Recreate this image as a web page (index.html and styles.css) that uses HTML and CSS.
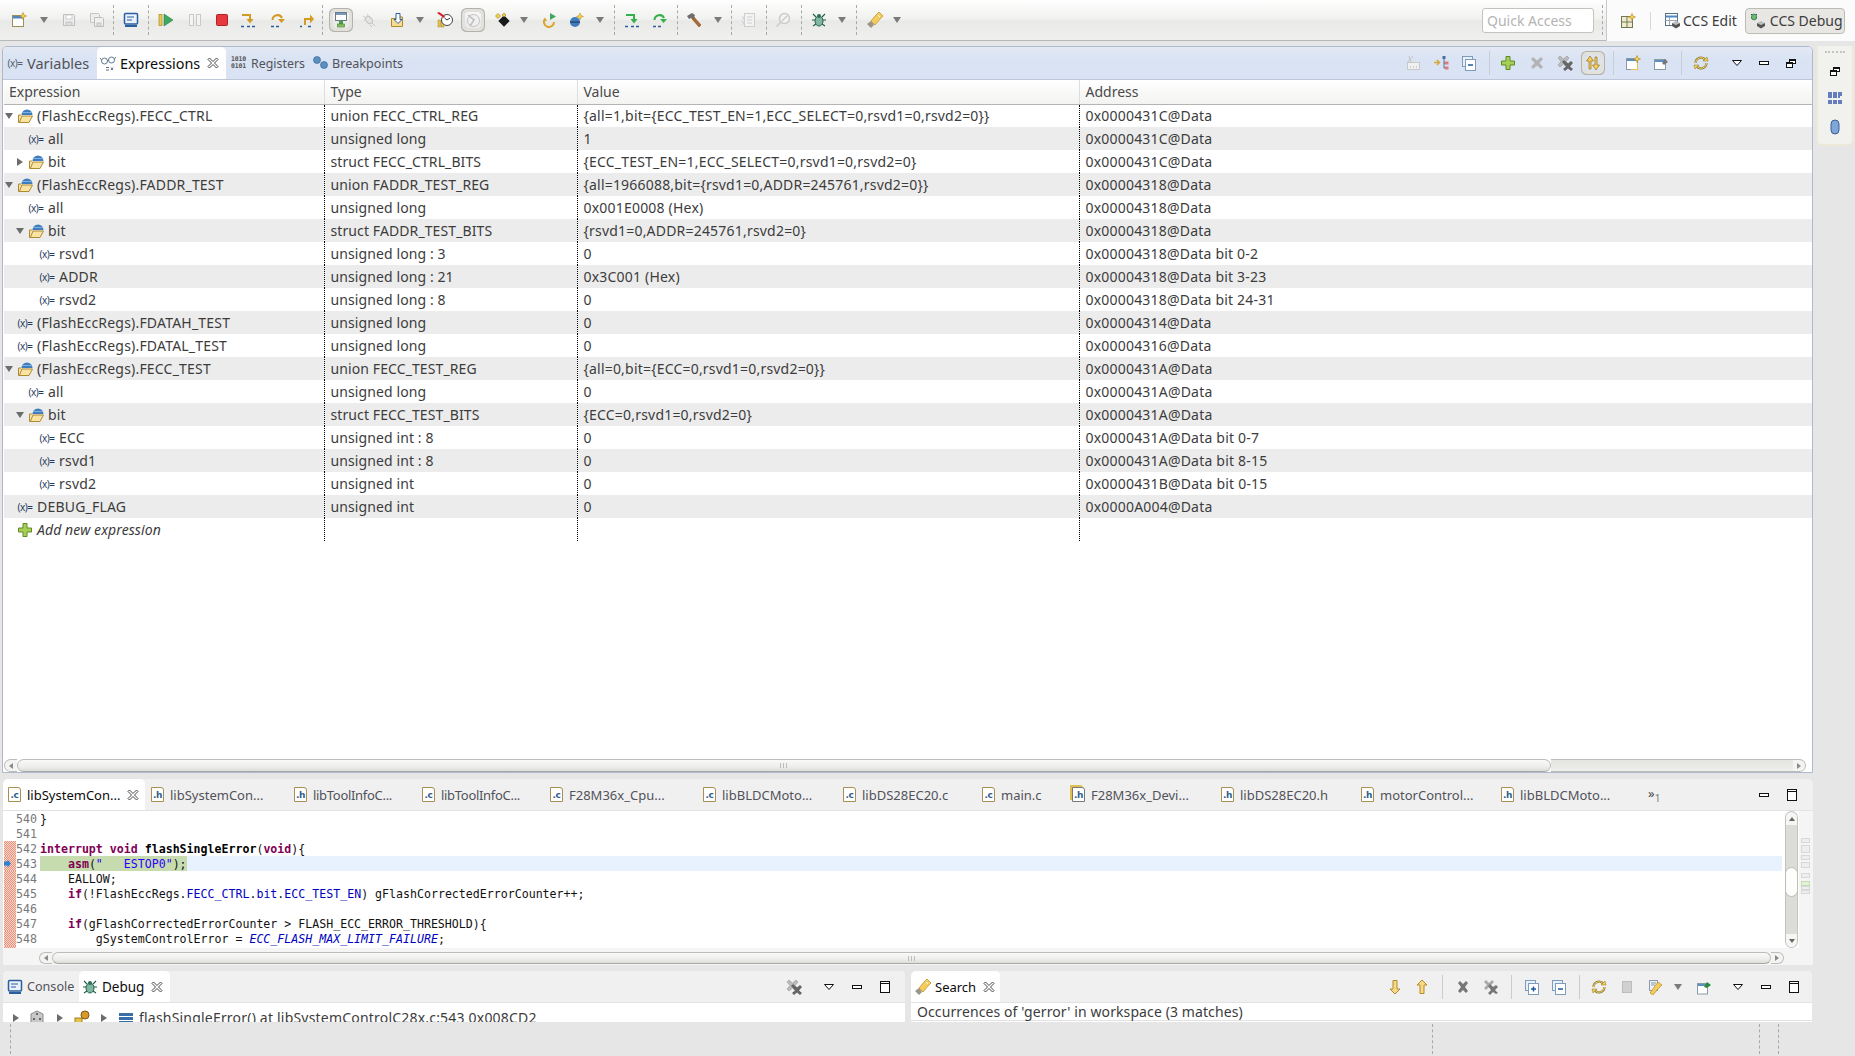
FILE: index.html
```html
<!DOCTYPE html>
<html lang="en">
<head>
<meta charset="utf-8">
<title>CCS Debug</title>
<link rel="stylesheet" href="styles.css">
</head>
<body>
<svg class="defs" width="0" height="0">
<symbol id="new" viewBox="0 0 16 16"><rect x="1.500" y="3.500" width="11" height="11" fill="#fff" stroke="#9a8f5a"/><rect x="2" y="4" width="10" height="2.500" fill="#4f86c4"/><path d="M12 .5l1 2.500 2.500 1-2.500 1-1 2.500-1-2.500-2.500-1 2.500-1z" fill="#f5d04a" stroke="#b08a20" stroke-width=".6"/></symbol>
<symbol id="save" viewBox="0 0 16 16"><path d="M2.500 2.500h10l1 1v10h-11z" fill="#f0f0f0" stroke="#bdbdbd"/><rect x="5" y="3" width="6" height="4" fill="#fff" stroke="#ccc"/><rect x="5" y="10" width="6" height="3.500" fill="#ddd" stroke="#c4c4c4"/></symbol>
<symbol id="saveall" viewBox="0 0 16 16"><path d="M1.500 1.500h8l1 1v8h-9z" fill="#eee" stroke="#c6c6c6"/><path d="M5.500 5.500h8l1 1v8h-9z" fill="#f0f0f0" stroke="#bdbdbd"/><rect x="8" y="11" width="4" height="3" fill="#ddd" stroke="#c4c4c4"/></symbol>
<symbol id="term" viewBox="0 0 16 16"><rect x="1.500" y="1.500" width="13" height="10.500" rx="1" fill="#eaf1fa" stroke="#2a5f9e" stroke-width="1.500"/><path d="M4 5h7M4 8h5" stroke="#2a5f9e" stroke-width="1.200"/><rect x="2" y="13" width="12" height="2" fill="#2a5f9e"/></symbol>
<symbol id="resume" viewBox="0 0 16 16"><rect x="1" y="2.500" width="3" height="11" fill="#e9c94f" stroke="#a98a1f" stroke-width=".7"/><path d="M6 2l9 6-9 6z" fill="#3fa75e" stroke="#2a7d44" stroke-width=".6"/></symbol>
<symbol id="suspend" viewBox="0 0 16 16"><rect x="2.500" y="2.500" width="4" height="11" fill="#f4f4f4" stroke="#c9c9c9"/><rect x="9.500" y="2.500" width="4" height="11" fill="#f4f4f4" stroke="#c9c9c9"/></symbol>
<symbol id="stop" viewBox="0 0 16 16"><rect x="2.500" y="2.500" width="11" height="11" rx="1" fill="#e5393c" stroke="#b02225"/></symbol>
<symbol id="into" viewBox="0 0 16 16"><path d="M2 3h8v5" fill="none" stroke="currentColor" stroke-width="2"/><path d="M6.500 7h7L10 11.500z" fill="currentColor"/><path d="M1 14.500h3M7 14.500h3M12 14.500h3" stroke="#2a5f9e" stroke-width="1.300"/></symbol>
<symbol id="over" viewBox="0 0 16 16"><path d="M2.500 8a5 5 0 0 1 9.500-2" fill="none" stroke="currentColor" stroke-width="2"/><path d="M8 7h7l-3.500 4z" fill="currentColor"/><path d="M1 14.500h3M6 14.500h3" stroke="#2a5f9e" stroke-width="1.300"/></symbol>
<symbol id="ret" viewBox="0 0 16 16"><path d="M5 13V7h6" fill="none" stroke="currentColor" stroke-width="2"/><path d="M10 2.500v9l4-4.500z" fill="currentColor"/><path d="M0 14.500h2M8 14.500h3" stroke="#2a5f9e" stroke-width="1.300"/></symbol>
<symbol id="connect" viewBox="0 0 16 16"><rect x="2.500" y=".5" width="11" height="8" fill="#fff" stroke="#6a7c8c"/><rect x="3" y="1" width="10" height="2" fill="#7a98b8"/><rect x="6" y="9" width="4" height="3" fill="#48a04c"/><rect x="4.500" y="12" width="7" height="3" fill="#8cbf5a" stroke="#3c7f3c" stroke-width=".6"/></symbol>
<symbol id="bugoff" viewBox="0 0 16 16"><ellipse cx="8" cy="8" rx="3" ry="4" transform="rotate(-40 8 8)" fill="#e4e4e4" stroke="#c4c4c4"/><path d="M2 4l3 2M6 2l2 3M11 11l3 3M9 13l2 2M3 8h2" stroke="#c8c8c8"/></symbol>
<symbol id="folderdn" viewBox="0 0 16 16"><path d="M1.500 14.500v-8h5l1-1.500h5v9.500z" fill="#f7dc92" stroke="#b08a30"/><path d="M6 1.500h4v6h2L8 11.500 4 7.500h2z" fill="#fff" stroke="#2a5f9e"/></symbol>
<symbol id="bpskip" viewBox="0 0 16 16"><rect x="1" y="8" width="2.500" height="7" fill="#e5c24a" stroke="#a98a1f" stroke-width=".5"/><rect x="4.500" y="8" width="2.500" height="7" fill="#e5c24a" stroke="#a98a1f" stroke-width=".5"/><circle cx="10" cy="8" r="5.500" fill="#fff" stroke="#444"/><path d="M10 8L7.500 6M10 8l3-2" stroke="#333"/><path d="M0 1l7 5 1-2-6-4z" fill="#d6202a"/></symbol>
<symbol id="clockoff" viewBox="0 0 16 16"><circle cx="8.500" cy="8.500" r="6" fill="#f0f0f0" stroke="#c2c2c2"/><path d="M3 3l6 5-4 6" fill="none" stroke="#bdbdbd" stroke-width="1.500"/></symbol>
<symbol id="chip" viewBox="0 0 16 16"><rect x="5" y="5" width="8" height="8" transform="rotate(45 9 9)" fill="#1a1a1a"/><path d="M3 1.500l2.500 2.500L3 6.500.5 4z" fill="#f5d04a" stroke="#9a7a15" stroke-width=".6"/><path d="M9 1l2 2-2 2-2-2z" fill="#f5d04a" stroke="#9a7a15" stroke-width=".6"/></symbol>
<symbol id="restart" viewBox="0 0 16 16"><path d="M8 1l6 3.500L8 8z" fill="#3fa75e"/><path d="M3 7a5 5 0 1 0 9 3" fill="none" stroke="#d9a62a" stroke-width="2"/><path d="M1 9h4L3 5.500z" fill="#d9a62a"/></symbol>
<symbol id="ball" viewBox="0 0 16 16"><circle cx="7" cy="10" r="5" fill="#3f7dbe"/><rect x="2" y="9.500" width="10" height="1.200" fill="#1d3f68"/><path d="M12 1l1 2.500 2.500 1-2.500 1-1 2.500-1-2.500-2.500-1 2.500-1z" fill="#f5d04a" stroke="#b08a20" stroke-width=".5"/></symbol>
<symbol id="hammer" viewBox="0 0 16 16"><path d="M1 4l5-3 3 2-1 3-2 1-1-1-2 1z" fill="#6e6e6e"/><path d="M6 7l2-2 7 8-2 2z" fill="#a86a32" stroke="#704418" stroke-width=".5"/></symbol>
<symbol id="listoff" viewBox="0 0 16 16"><rect x="4.500" y="1.500" width="10" height="13" fill="#f3f3f3" stroke="#cfcfcf"/><path d="M2 4l2 2-2 2M2 9l2 2-2 2M7 5h5M7 8h5M7 11h5" fill="none" stroke="#cfcfcf"/></symbol>
<symbol id="searchoff" viewBox="0 0 16 16"><circle cx="9.500" cy="6.500" r="5" fill="#f4f4f4" stroke="#cbcbcb" stroke-width="1.500"/><path d="M6 10l-4.500 4.500M7 9l5-5" stroke="#cbcbcb" stroke-width="1.500"/></symbol>
<symbol id="bug" viewBox="0 0 16 16"><path d="M2 2l3 3M14 2l-3 3M1 8h3M15 8h-3M2 14l3-2M14 14l-3-2" stroke="#1f5a4a" stroke-width="1.100"/><ellipse cx="8" cy="9" rx="4" ry="5" fill="#7fb7a0" stroke="#27604f"/><circle cx="8" cy="4" r="2" fill="#2f6f5a"/></symbol>
<symbol id="flash" viewBox="0 0 16 16"><path d="M9 3l3-3 4 4-3 3-5 6-4-4z" fill="#f3cc5c" stroke="#b58a22" stroke-width=".7"/><path d="M4 9l3 4-3 3-4-4z" fill="#9a948a"/><path d="M11 3l2 2" stroke="#fff"/></symbol>
<symbol id="persp" viewBox="0 0 16 16"><rect x="1.500" y="3.500" width="11" height="11" fill="#f2ead0" stroke="#6f7a55"/><path d="M1.500 9h11M7 3.500v11" stroke="#6f7a55"/><path d="M12 .5l1 2.500 2.500 1-2.500 1-1 2.500-1-2.500-2.500-1 2.500-1z" fill="#f5d04a" stroke="#b08a20" stroke-width=".6"/></symbol>
<symbol id="edit" viewBox="0 0 16 16"><rect x=".5" y=".5" width="12" height="12" fill="#fff" stroke="#5a6f80"/><path d="M.5 3.500h12" stroke="#4f86c4" stroke-width="2"/><path d="M4.500 4v8M.5 7.500h12" stroke="#9aa6b0"/><path d="M7 10l4-2 4 2-4 2z" fill="#bdbdbd"/><path d="M7 10v3l4 2.500V12zM15 10v3l-4 2.500V12z" fill="#555"/></symbol>
<symbol id="debugp" viewBox="0 0 16 16"><path d="M1 1l2 2M7 1L5 3M1 5h2M7 5H5" stroke="#1f5a4a"/><ellipse cx="4" cy="4" rx="2.500" ry="3" fill="#6fbf6a" stroke="#27604f" stroke-width=".7"/><path d="M7 10l4-2 4 2-4 2z" fill="#bdbdbd"/><path d="M7 10v3l4 2.500V12zM15 10v3l-4 2.500V12z" fill="#555"/></symbol>
<symbol id="glasses" viewBox="0 0 16 16"><circle cx="4.500" cy="6" r="3" fill="#fff" stroke="#5f7a8c"/><circle cx="11.500" cy="5" r="3" fill="#fff" stroke="#5f7a8c"/><path d="M7.500 5.500l1-.3M1.500 5L0 3M14.500 4L16 2" stroke="#5f7a8c"/><path d="M6 12.500h3M6 15h3M11 12.500l2 2.500M13 12.500L11 15" stroke="#5a6c7a"/></symbol>
<symbol id="bps" viewBox="0 0 16 16"><circle cx="5" cy="5" r="3.500" fill="#5b8fc0" stroke="#2f6090" stroke-width=".6"/><circle cx="12" cy="10" r="3.500" fill="#5b8fc0" stroke="#2f6090" stroke-width=".6"/></symbol>
<symbol id="fold" viewBox="0 0 16 16"><path d="M4.500 7a5.500 5.500 0 0 1 11 0z" fill="#3f7dbe"/><path d="M5 4.500h10" stroke="#7fb0e0"/><path d="M4.500 7H1.500v7.500h10.500L15.500 8H5L2.500 14" fill="#f8e3a3" stroke="#b08a30"/></symbol>
<symbol id="plus" viewBox="0 0 16 16"><path d="M6 1.500h4v4.500h4.500v4H10v4.500H6V10H1.500V6H6z" fill="#a7ce56" stroke="#5d8c24"/></symbol>
<symbol id="xdis" viewBox="0 0 16 16"><path d="M2 4l2-2 4 3.500L12 2l2 2-3.500 4 3.500 4-2 2-4-3.500L4 14l-2-2 3.500-4z" fill="#b4b4b4"/></symbol>
<symbol id="xx" viewBox="0 0 16 16"><path d="M1 3l2-2 3.500 3L10 1l2 2-3 3.500 3 3.500-2 2-3.500-3L3 12l-2-2 3-3.500z" fill="#bbb" stroke="#888" stroke-width=".5"/><path d="M5 7l2-2 4 3.500L14 6l2 2-3 3.500 3 2.500-2 2-3-2.500L8 16l-2-2 3-2.500z" fill="#666"/></symbol>
<symbol id="sync" viewBox="0 0 16 16"><path d="M4 14V6H1.500L5 1l3.500 5H6v8z" fill="#f3cc5c" stroke="#a87f1c" stroke-width=".8"/><path d="M12 2v8h2.500L11 15l-3.500-5H10V2z" fill="#f3cc5c" stroke="#a87f1c" stroke-width=".8"/></symbol>
<symbol id="cyc" viewBox="0 0 16 16"><path d="M2.500 8a5.500 5.500 0 0 1 10-3" fill="none" stroke="#8a7a3a" stroke-width="2.200"/><path d="M13.500 8a5.500 5.500 0 0 1-10 3" fill="none" stroke="#8a7a3a" stroke-width="2.200"/><path d="M2.500 8a5.500 5.500 0 0 1 10-3" fill="none" stroke="#f3d35c" stroke-width="1"/><path d="M13.500 8a5.500 5.500 0 0 1-10 3" fill="none" stroke="#f3d35c" stroke-width="1"/><path d="M10 6h5l-1-4zM6 10H1l1 4z" fill="#f3cc5c" stroke="#917015" stroke-width=".5"/></symbol>
<symbol id="pin" viewBox="0 0 16 16"><rect x="1.500" y="4.500" width="11" height="10" fill="#fff" stroke="#8a9aa8"/><rect x="2" y="5" width="10" height="2" fill="#5b8fc0"/><path d="M9 8l3-4 3 3-4 3z" fill="#777"/></symbol>
<symbol id="newv" viewBox="0 0 16 16"><rect x="1.500" y="3.500" width="11" height="11" fill="#fff" stroke="#8a9aa8"/><rect x="2" y="4" width="10" height="2" fill="#5b8fc0"/><path d="M12.500 8v6.500H6" fill="none" stroke="#e5c24a"/><path d="M12 .5l1 2.500 2.500 1-2.500 1-1 2.500-1-2.500-2.500-1 2.500-1z" fill="#f5d04a" stroke="#b08a20" stroke-width=".6"/></symbol>
<symbol id="tflat" viewBox="0 0 16 16"><path d="M1 7.500h5M4 5l2.500 2.500L4 10" fill="none" stroke="#d3a93a" stroke-width="1.500"/><path d="M11 3v10M11 8h2M11 13h2" fill="none" stroke="#4a6f9a"/><rect x="9.500" y="1" width="3" height="3" fill="#4a6f9a"/><rect x="12" y="6.500" width="3.500" height="3" fill="#e27a7a"/><rect x="12" y="11.500" width="3.500" height="3" fill="#e27a7a"/></symbol>
<symbol id="colla" viewBox="0 0 16 16"><rect x="1.500" y="1.500" width="10" height="10" fill="#e8f0fa" stroke="#7f9bbb"/><rect x="4.500" y="4.500" width="10" height="11" fill="#fff" stroke="#7f9bbb"/><path d="M7 10h5" stroke="#1c5a9c" stroke-width="1.500"/></symbol>
<symbol id="expa" viewBox="0 0 16 16"><rect x="1.500" y="1.500" width="10" height="10" fill="#e8f0fa" stroke="#7f9bbb"/><rect x="4.500" y="4.500" width="10" height="11" fill="#fff" stroke="#7f9bbb"/><path d="M7 10h5M9.500 7.500v5" stroke="#1c5a9c" stroke-width="1.500"/></symbol>
<symbol id="expoff" viewBox="0 0 16 16"><path d="M5 1l2 6-2 5M9 1L3 8" stroke="#c4c4c4" fill="none"/><rect x="3.500" y="7.500" width="12" height="7" fill="#f0f0f0" stroke="#c8c8c8"/><path d="M6 12h1M9 12h1M12 12h1" stroke="#aaa"/></symbol>
<symbol id="vmenu" viewBox="0 0 16 16"><path d="M3.500 5.500h9L8 10.500z" fill="#fff" stroke="#111"/></symbol>
<symbol id="min" viewBox="0 0 16 16"><rect x="3.500" y="6.500" width="9" height="3" fill="#fff" stroke="#111"/></symbol>
<symbol id="max" viewBox="0 0 16 16"><rect x="3.500" y="2.500" width="9" height="11" fill="#fff" stroke="#111"/><path d="M3.500 4.500h9" stroke="#111"/></symbol>
<symbol id="rest" viewBox="0 0 16 16"><rect x="6.500" y="4.500" width="6" height="4" fill="#fff" stroke="#111"/><rect x="3.500" y="7.500" width="6" height="5" fill="#fff" stroke="#111"/><path d="M3.500 8.500h6M6.500 5.500h6" stroke="#111"/></symbol>
<symbol id="close" viewBox="0 0 16 16"><path d="M3 4.500L4.500 3 8 6.500 11.500 3 13 4.500 9.500 8 13 11.500 11.500 13 8 9.500 4.500 13 3 11.500 6.500 8z" fill="#fff" stroke="#333" stroke-width=".9"/></symbol>
<symbol id="down" viewBox="0 0 16 16"><path d="M6 1.500h4V10h3l-5 5-5-5h3z" fill="#f7d98a" stroke="#b58a22"/></symbol>
<symbol id="up" viewBox="0 0 16 16"><path d="M6 14.500h4V6h3L8 1 3 6h3z" fill="#f7d98a" stroke="#b58a22"/></symbol>
<symbol id="greybox" viewBox="0 0 16 16"><rect x="3.500" y="2.500" width="9" height="11" fill="#d0d0d0" stroke="#bdbdbd"/></symbol>
<symbol id="srch" viewBox="0 0 16 16"><rect x="2.500" y="1.500" width="8" height="10" fill="#eef2f8" stroke="#8a9aa8"/><path d="M4 4h5M4 6h4" stroke="#8a9aa8"/><path d="M8 7l3-4 4 3-4 4-5 6-3-2z" fill="#f3cc5c" stroke="#a87f1c" stroke-width=".6"/></symbol>
<symbol id="pingr" viewBox="0 0 16 16"><rect x="1.500" y="4.500" width="10" height="10.500" fill="#fff" stroke="#8a9aa8"/><rect x="2" y="5" width="9" height="2" fill="#5b8fc0"/><path d="M8 8l3-5 4 3-4 3z" fill="#2c8a3c"/></symbol>
<symbol id="rm" viewBox="0 0 16 16"><path d="M3 4l2-2 3 3 3-3 2 2-3 4 3 4-2 2-3-3-3 3-2-2 3-4z" fill="#777"/></symbol>
<symbol id="rmall" viewBox="0 0 16 16"><path d="M1 3l2-2 3 3 3-3 2 2-3 3 3 3-2 2-3-3-3 3-2-2 3-3z" fill="#aaa"/><path d="M5 7l2-2 3 3 3-2 2 2-3 3 3 3-2 1-3-2-3 3-2-2 3-3z" fill="#777"/></symbol>
<symbol id="stack" viewBox="0 0 16 16"><path d="M1 3h14v3H1zM1 7h14v3H1zM1 11h14v3H1z" fill="#3a6ea5"/></symbol>
<symbol id="proc" viewBox="0 0 16 16"><path d="M8 1l6 3v8l-6 3-6-3V4z" fill="#c8c8c8" stroke="#8a8a8a"/><circle cx="8" cy="4" r="1" fill="#444"/><circle cx="5" cy="9" r="1" fill="#444"/><circle cx="11" cy="9" r="1" fill="#444"/></symbol>
<symbol id="thr" viewBox="0 0 16 16"><rect x="1" y="8" width="7" height="7" fill="#e5c24a" stroke="#a0801c"/><circle cx="11" cy="5" r="4" fill="#d99a2a" stroke="#80580f"/></symbol>
<symbol id="tdown" viewBox="0 0 16 16"><rect x="4" y="1" width="8" height="14" rx="4" fill="#7fa6d8" stroke="#3a5f95"/></symbol>
<symbol id="lines" viewBox="0 0 16 16"><path d="M1 2h14M1 4h14M1 6h12M1 10h14M1 12h14" stroke="#3a55b0" stroke-width="1.300" stroke-dasharray="4 1"/></symbol>
</svg>

<header class="topbar">
  <div class="tb-grid maintb">
    <svg class="ic"><use href="#new"/></svg><span class="dd"></span>
    <svg class="ic"><use href="#save"/></svg><svg class="ic"><use href="#saveall"/></svg><span class="sep"></span>
    <svg class="ic"><use href="#term"/></svg><span class="sep"></span>
    <svg class="ic"><use href="#resume"/></svg><svg class="ic"><use href="#suspend"/></svg><svg class="ic"><use href="#stop"/></svg>
    <svg class="ic or"><use href="#into"/></svg><svg class="ic or"><use href="#over"/></svg><svg class="ic or"><use href="#ret"/></svg><span class="sep"></span>
    <svg class="ic on"><use href="#connect"/></svg><svg class="ic"><use href="#bugoff"/></svg><svg class="ic"><use href="#folderdn"/></svg><span class="dd"></span>
    <svg class="ic"><use href="#bpskip"/></svg><svg class="ic on"><use href="#clockoff"/></svg><svg class="ic"><use href="#chip"/></svg><span class="dd"></span>
    <svg class="ic"><use href="#restart"/></svg><svg class="ic"><use href="#ball"/></svg><span class="dd"></span><span class="sep"></span>
    <svg class="ic gr"><use href="#into"/></svg><svg class="ic gr"><use href="#over"/></svg><span class="sep"></span>
    <svg class="ic"><use href="#hammer"/></svg><span class="dd"></span><span class="sep"></span>
    <svg class="ic"><use href="#listoff"/></svg><span class="sep"></span>
    <svg class="ic"><use href="#searchoff"/></svg><span class="sep"></span>
    <svg class="ic"><use href="#bug"/></svg><span class="dd"></span><span class="sep"></span>
    <svg class="ic"><use href="#flash"/></svg><span class="dd"></span>
  </div>
  <div class="perspectives">
    <div class="quick">Quick Access</div>
    <span class="sep tall"></span>
    <div class="perspbar">
      <svg class="ic"><use href="#persp"/></svg>
      <span class="vline"></span>
      <div class="persp"><svg class="ic"><use href="#edit"/></svg>CCS Edit</div>
      <div class="persp active"><svg class="ic"><use href="#debugp"/></svg>CCS Debug</div>
    </div>
  </div>
</header>

<div class="work">
  <main class="main">
    <section class="panel exprpanel">
      <div class="tabbar bluebar">
        <div class="tab t-var"><span class="vic big">(x)=</span>Variables</div>
        <div class="tab t-exp active"><svg class="ic"><use href="#glasses"/></svg>Expressions<svg class="ic closeic"><use href="#close"/></svg></div>
        <div class="tab t-reg small"><span class="bits">1010<br>0101</span>Registers</div>
        <div class="tab t-bp small"><svg class="ic"><use href="#bps"/></svg>Breakpoints</div>
        <div class="tb-grid exprtb">
          <svg class="ic"><use href="#expoff"/></svg><svg class="ic"><use href="#tflat"/></svg><svg class="ic"><use href="#colla"/></svg><span class="sep solid"></span>
          <svg class="ic"><use href="#plus"/></svg><svg class="ic"><use href="#xdis"/></svg><svg class="ic"><use href="#xx"/></svg><svg class="ic on"><use href="#sync"/></svg><span class="sep solid"></span>
          <svg class="ic"><use href="#newv"/></svg><svg class="ic"><use href="#pin"/></svg><span class="sep solid"></span>
          <svg class="ic"><use href="#cyc"/></svg><svg class="ic"><use href="#vmenu"/></svg><svg class="ic"><use href="#min"/></svg><svg class="ic"><use href="#rest"/></svg>
        </div>
      </div>
      <div class="exprbody">
        <table class="exprs">
          <colgroup><col class="c1"><col class="c2"><col class="c3"><col></colgroup>
          <thead><tr><th>Expression</th><th>Type</th><th>Value</th><th>Address</th></tr></thead>
          <tbody>
            <tr><td><div class="en l0"><span class="ar down"></span><svg class="ic"><use href="#fold"/></svg>(FlashEccRegs).FECC_CTRL</div></td><td>union FECC_CTRL_REG</td><td>{all=1,bit={ECC_TEST_EN=1,ECC_SELECT=0,rsvd1=0,rsvd2=0}}</td><td>0x0000431C@Data</td></tr>
            <tr><td><div class="en l1"><span class="ar"></span><span class="vic">(x)=</span>all</div></td><td>unsigned long</td><td>1</td><td>0x0000431C@Data</td></tr>
            <tr><td><div class="en l1"><span class="ar right"></span><svg class="ic"><use href="#fold"/></svg>bit</div></td><td>struct FECC_CTRL_BITS</td><td>{ECC_TEST_EN=1,ECC_SELECT=0,rsvd1=0,rsvd2=0}</td><td>0x0000431C@Data</td></tr>
            <tr><td><div class="en l0"><span class="ar down"></span><svg class="ic"><use href="#fold"/></svg>(FlashEccRegs).FADDR_TEST</div></td><td>union FADDR_TEST_REG</td><td>{all=1966088,bit={rsvd1=0,ADDR=245761,rsvd2=0}}</td><td>0x00004318@Data</td></tr>
            <tr><td><div class="en l1"><span class="ar"></span><span class="vic">(x)=</span>all</div></td><td>unsigned long</td><td>0x001E0008 (Hex)</td><td>0x00004318@Data</td></tr>
            <tr><td><div class="en l1"><span class="ar down"></span><svg class="ic"><use href="#fold"/></svg>bit</div></td><td>struct FADDR_TEST_BITS</td><td>{rsvd1=0,ADDR=245761,rsvd2=0}</td><td>0x00004318@Data</td></tr>
            <tr><td><div class="en l2"><span class="ar"></span><span class="vic">(x)=</span>rsvd1</div></td><td>unsigned long : 3</td><td>0</td><td>0x00004318@Data bit 0-2</td></tr>
            <tr><td><div class="en l2"><span class="ar"></span><span class="vic">(x)=</span>ADDR</div></td><td>unsigned long : 21</td><td>0x3C001 (Hex)</td><td>0x00004318@Data bit 3-23</td></tr>
            <tr><td><div class="en l2"><span class="ar"></span><span class="vic">(x)=</span>rsvd2</div></td><td>unsigned long : 8</td><td>0</td><td>0x00004318@Data bit 24-31</td></tr>
            <tr><td><div class="en l0"><span class="ar"></span><span class="vic">(x)=</span>(FlashEccRegs).FDATAH_TEST</div></td><td>unsigned long</td><td>0</td><td>0x00004314@Data</td></tr>
            <tr><td><div class="en l0"><span class="ar"></span><span class="vic">(x)=</span>(FlashEccRegs).FDATAL_TEST</div></td><td>unsigned long</td><td>0</td><td>0x00004316@Data</td></tr>
            <tr><td><div class="en l0"><span class="ar down"></span><svg class="ic"><use href="#fold"/></svg>(FlashEccRegs).FECC_TEST</div></td><td>union FECC_TEST_REG</td><td>{all=0,bit={ECC=0,rsvd1=0,rsvd2=0}}</td><td>0x0000431A@Data</td></tr>
            <tr><td><div class="en l1"><span class="ar"></span><span class="vic">(x)=</span>all</div></td><td>unsigned long</td><td>0</td><td>0x0000431A@Data</td></tr>
            <tr><td><div class="en l1"><span class="ar down"></span><svg class="ic"><use href="#fold"/></svg>bit</div></td><td>struct FECC_TEST_BITS</td><td>{ECC=0,rsvd1=0,rsvd2=0}</td><td>0x0000431A@Data</td></tr>
            <tr><td><div class="en l2"><span class="ar"></span><span class="vic">(x)=</span>ECC</div></td><td>unsigned int : 8</td><td>0</td><td>0x0000431A@Data bit 0-7</td></tr>
            <tr><td><div class="en l2"><span class="ar"></span><span class="vic">(x)=</span>rsvd1</div></td><td>unsigned int : 8</td><td>0</td><td>0x0000431A@Data bit 8-15</td></tr>
            <tr><td><div class="en l2"><span class="ar"></span><span class="vic">(x)=</span>rsvd2</div></td><td>unsigned int</td><td>0</td><td>0x0000431B@Data bit 0-15</td></tr>
            <tr><td><div class="en l0"><span class="ar"></span><span class="vic">(x)=</span>DEBUG_FLAG</div></td><td>unsigned int</td><td>0</td><td>0x0000A004@Data</td></tr>
            <tr><td><div class="en l0 addnew"><span class="ar"></span><svg class="ic"><use href="#plus"/></svg>Add new expression</div></td><td></td><td></td><td></td></tr>
          </tbody>
        </table>
      </div>
      <div class="hscroll top">
        <span class="sbtn left"></span><div class="thumb"><span class="grip"></span></div><span class="strack"></span><span class="sbtn right"></span>
      </div>
    </section>

    <section class="panel editor">
      <div class="tabbar greybar edtabs">
        <div class="tab etab active"><span class="fi">.c</span>libSystemCon...<svg class="ic closeic"><use href="#close"/></svg></div>
        <div class="tab etab"><span class="fi">.h</span>libSystemCon...</div>
        <div class="tab etab"><span class="fi">.h</span>libToolInfoC...</div>
        <div class="tab etab"><span class="fi">.c</span>libToolInfoC...</div>
        <div class="tab etab"><span class="fi">.c</span>F28M36x_Cpu...</div>
        <div class="tab etab"><span class="fi">.c</span>libBLDCMoto...</div>
        <div class="tab etab"><span class="fi">.c</span>libDS28EC20.c</div>
        <div class="tab etab"><span class="fi">.c</span>main.c</div>
        <div class="tab etab"><span class="fi shared">.h</span>F28M36x_Devi...</div>
        <div class="tab etab"><span class="fi">.h</span>libDS28EC20.h</div>
        <div class="tab etab"><span class="fi">.h</span>motorControl...</div>
        <div class="tab etab"><span class="fi">.h</span>libBLDCMoto...</div>
        <div class="chev">»<sub>1</sub></div>
        <div class="tb-grid edtb"><svg class="ic"><use href="#min"/></svg><svg class="ic"><use href="#max"/></svg></div>
      </div>
      <div class="edbody">
        <div class="edmain">
          <div class="edrow">
            <div class="code">
              <div class="ln"><span class="gut"></span><span class="num">540</span><span class="src">}</span></div>
              <div class="ln"><span class="gut"></span><span class="num">541</span><span class="src"></span></div>
              <div class="ln"><span class="gut hatch"></span><span class="num">542</span><span class="src"><b>interrupt</b> <b>void</b> <strong>flashSingleError</strong>(<b>void</b>){</span></div>
              <div class="ln"><span class="gut hatch"><span class="marker"></span></span><span class="num">543</span><span class="src cur"><span class="green">    <b>asm</b>(<i class="str">"   ESTOP0"</i>);</span></span></div>
              <div class="ln"><span class="gut hatch"></span><span class="num">544</span><span class="src">    EALLOW;</span></div>
              <div class="ln"><span class="gut hatch"></span><span class="num">545</span><span class="src">    <b>if</b>(!FlashEccRegs.<u>FECC_CTRL</u>.<u>bit</u>.<u>ECC_TEST_EN</u>) gFlashCorrectedErrorCounter++;</span></div>
              <div class="ln"><span class="gut hatch"></span><span class="num">546</span><span class="src"></span></div>
              <div class="ln"><span class="gut hatch"></span><span class="num">547</span><span class="src">    <b>if</b>(gFlashCorrectedErrorCounter &gt; FLASH_ECC_ERROR_THRESHOLD){</span></div>
              <div class="ln"><span class="gut hatch"></span><span class="num">548</span><span class="src">        gSystemControlError = <em>ECC_FLASH_MAX_LIMIT_FAILURE</em>;</span></div>
              <div class="ln tail"><span class="gut hatch"></span></div>
            </div>
            <div class="vscroll">
              <span class="vbtn up"></span>
              <div class="vtrack"><span class="vthumb"></span></div>
              <span class="vbtn dn"></span>
            </div>
          </div>
          <div class="hscroll ed">
            <span class="sbtn left"></span><div class="thumb"><span class="grip"></span></div><span class="sbtn right"></span>
          </div>
        </div>
        <div class="ruler">
          <span class="mk h5"></span><span class="mk h8"></span><span class="mk h5"></span><span class="mk h6"></span><span class="mk h5 gap"></span><span class="mk h5 gmk"></span><span class="mk h3"></span><span class="mk h3"></span>
        </div>
      </div>
    </section>

    <div class="bottomrow">
      <section class="panel debugp">
        <div class="tabbar greybar">
          <div class="tab t-con small"><svg class="ic"><use href="#term"/></svg>Console</div>
          <div class="tab t-dbg active"><svg class="ic"><use href="#bug"/></svg>Debug<svg class="ic closeic"><use href="#close"/></svg></div>
          <div class="tb-grid dbgtb"><svg class="ic"><use href="#xx"/></svg><svg class="ic"><use href="#vmenu"/></svg><svg class="ic"><use href="#min"/></svg><svg class="ic"><use href="#max"/></svg></div>
        </div>
        <div class="dbgtree"><span class="ar right"></span><svg class="ic"><use href="#proc"/></svg><span class="ar right"></span><svg class="ic"><use href="#thr"/></svg><span class="ar right"></span><svg class="ic"><use href="#stack"/></svg><span class="frame">flashSingleError() at libSystemControlC28x.c:543 0x008CD2</span></div>
      </section>
      <section class="panel searchp">
        <div class="tabbar greybar">
          <div class="tab t-sea active"><svg class="ic"><use href="#flash"/></svg>Search<svg class="ic closeic"><use href="#close"/></svg></div>
          <div class="tb-grid seatb">
            <svg class="ic"><use href="#down"/></svg><svg class="ic"><use href="#up"/></svg><span class="sep solid"></span>
            <svg class="ic"><use href="#rm"/></svg><svg class="ic"><use href="#rmall"/></svg><span class="sep solid"></span>
            <svg class="ic"><use href="#expa"/></svg><svg class="ic"><use href="#colla"/></svg><span class="sep solid"></span>
            <svg class="ic"><use href="#cyc"/></svg><svg class="ic"><use href="#greybox"/></svg><svg class="ic"><use href="#srch"/></svg><span class="dd"></span><svg class="ic"><use href="#pingr"/></svg>
            <svg class="ic"><use href="#vmenu"/></svg><svg class="ic"><use href="#min"/></svg><svg class="ic"><use href="#max"/></svg>
          </div>
        </div>
        <div class="searchres">Occurrences of 'gerror' in workspace (3 matches)</div>
      </section>
    </div>

    <footer class="status"><span class="sep tall"></span><span class="sep tall"></span><span class="sep tall"></span><span class="sep tall"></span></footer>
  </main>
  <aside class="trim">
    <span class="tdots"></span>
    <svg class="ic"><use href="#rest"/></svg>
    <svg class="ic"><use href="#lines"/></svg>
    <svg class="ic"><use href="#tdown"/></svg>
  </aside>
</div>
</body>
</html>
```
FILE: styles.css
```css
* { box-sizing: border-box; }
html, body { margin: 0; height: 100%; }
body {
  width: 1855px; height: 1056px; overflow: hidden;
  background: #e6e6e6;
  font-family: "Noto Sans", "Open Sans", sans-serif;
  font-size: 14px; color: #3c3c3c;
  display: flex; flex-direction: column;
}
.defs { display: block; height: 0; }
.ic { width: 16px; height: 16px; display: block; flex: none; overflow: visible; }
.or { color: #d39a24; }
.gr { color: #35b04a; }
.on { border-radius: 2px; box-shadow: 0 0 0 3px #e3e1dc, 0 0 0 4px #b4b2ac; }

/* tool grids: each track is the distance to the next icon centre */
.tb-grid { display: grid; grid-auto-flow: column; align-items: center; justify-items: start; flex: none; }
.maintb {
  padding-left: 11px;
  grid-template-columns: 25px 25px 28px 16px 18px 17px 18px 29px 27px 26px 30px 30px 14px 19px 28px 29px 22px 25px 28px 30px 21px 26px 26px 24px 14px 18px 28px 17px 17px 24px 13px 17px 18px 17px 18px 18px 23px 14px 19px 22px 16px;
}
.exprtb { margin-left: auto; margin-right: 13px; grid-template-columns: 29px 28px 20px 19px 29px 28px 28px 20px 20px 28px 20px 20px 36px 27px 27px 16px; }
.edtb { margin-left: auto; margin-right: 13px; grid-template-columns: 28px 16px; }
.dbgtb { margin-left: auto; margin-right: 12px; grid-template-columns: 35px 28px 28px 16px; }
.seatb { margin-left: auto; margin-right: 10px; grid-template-columns: 27px 20px 21px 28px 20px 21px 27px 20px 20px 28px 28px 23px 26px 34px 28px 28px 16px; }

.dd { width: 16px; height: 16px; display: flex; align-items: center; justify-content: center; }
.dd::before { content: ""; border: 4px solid transparent; border-top: 6px solid #7b7b7b; border-bottom: 0; }
.sep { width: 16px; height: 30px; display: flex; justify-content: center; }
.sep::before { content: ""; width: 0; border-left: 1px dashed #a9a9a4; }
.sep.solid { height: 24px; }
.sep.solid::before { border-left: 1px solid #c8ccd4; }

.topbar {
  height: 41px; flex: none; display: flex; align-items: center;
  background: linear-gradient(#fefefe, #f1f1ef 48%, #e9e9e7 52%, #f0f0ee);
  border-bottom: 1px solid #b8b8b6;
}
.perspectives { margin-left: auto; display: flex; align-items: center; height: 40px; }
.quick {
  width: 112px; height: 25px; padding-left: 4px; line-height: 24px;
  background: #fff; border: 1px solid #c4c2bc; border-radius: 3px; color: #b4b4b4; font-size: 14px;
}
.perspbar {
  width: 249px; height: 41px; margin-left: -4px; padding-left: 13px; display: flex; align-items: center;
  background: #fbfbfb; border-left: 1px solid #c8c8c8; margin-bottom: -1px;
}
.vline { width: 1px; height: 18px; background: #d8d8d8; margin: 0 14px; }
.persp { display: flex; align-items: center; gap: 2px; color: #3c3c3c; font-size: 14px; }
.persp.active {
  width: 100px; height: 26px; margin-left: 8px; padding-left: 4px; gap: 4px;
  background: #e8e7e3; border: 1px solid #bdbbb5; border-radius: 4px;
}

.work { flex: 1; display: flex; min-height: 0; }
.main { width: 1813px; flex: none; display: flex; flex-direction: column; padding-left: 2px; }
.trim {
  width: 38px; height: 100px; margin: 5px 0 0 3px; padding-top: 5px;
  display: flex; flex-direction: column; align-items: center; gap: 12px;
  background: #f1f1ee; border: 2px solid #ece9d8; border-top: 0; border-radius: 0 0 6px 6px;
}
.tdots { width: 20px; border-top: 2px dotted #c4c4c0; margin-bottom: -2px; }

.panel { display: flex; flex-direction: column; min-width: 0; overflow: hidden; border-radius: 5px 5px 0 0; }
.tabbar { height: 32px; flex: none; display: flex; align-items: stretch; }
.tabbar > .tb-grid { align-self: center; }
.bluebar { background: linear-gradient(#e3e9f4, #d9e3f3 40%); border-bottom: 1px solid #bcc7da; height: 33px; }
.greybar { background: #f0f0f0; border-bottom: 1px solid #e2e2e2; }
.tab { display: flex; align-items: center; gap: 4px; color: #52525a; flex: none; white-space: nowrap; font-size: 14px; }
.tab.active { background: #fff; color: #0c0c0c; border-radius: 5px 5px 0 0; }
.closeic { margin-left: auto; }

.exprpanel { height: 727px; margin-top: 5px; background: #fff; border: 1px solid #aeb9cd; }
.t-var { width: 94px; padding-left: 4px; font-size: 14.5px; }
.t-exp { width: 129px; padding: 0 5px 0 3px; font-size: 14.4px; }
.t-reg { width: 86px; padding-left: 5px; font-size: 12.4px; }
.t-bp { padding-left: 0; font-size: 12.6px; }
.vic { width: 16px; text-align: center; font-size: 10px; letter-spacing: -.5px; color: #1f3a60; flex: none; line-height: 16px; }
.vic.big { color: #55606e; }
.bits { width: 16px; flex: none; font: 700 6.5px/7px "DejaVu Sans Mono", monospace; color: #555; letter-spacing: -.2px; }

.exprbody { flex: 1; min-height: 0; padding-left: 1px; }
.exprs { width: 100%; border-collapse: collapse; table-layout: fixed; color: #3c3c3c; }
.c1 { width: 320px; }
.c2 { width: 253px; }
.c3 { width: 502px; }
.exprs th {
  height: 24px; padding: 0 0 0 6px; text-align: left; font-weight: 400; color: #4a4a4a;
  background: linear-gradient(#fff, #f3f3f1); border-bottom: 1px solid #b4b4b4; border-left: 1px solid #dedede;
}
.exprs th:first-child { border-left: 0; padding-left: 5px; }
.exprs td {
  height: 23px; padding: 0 0 0 6px; white-space: nowrap; overflow: hidden;
  border-left: 1px dotted #000; letter-spacing: .2px;
}
.exprs td:nth-child(2) { letter-spacing: .1px; }
.exprs td:first-child { border-left: 0; padding: 0; }
.exprs tbody tr:nth-child(even) { background: #ececec; }
.en { display: flex; align-items: center; gap: 4px; }
.ar { width: 13px; padding-right: 4px; margin-right: -4px; height: 16px; display: flex; align-items: center; justify-content: center; flex: none; }
.ar.down::before { content: ""; border: 4px solid transparent; border-top: 6px solid #6c6c6c; border-bottom: 0; }
.ar.right::before { content: ""; border: 4px solid transparent; border-left: 6px solid #6c6c6c; border-right: 0; }
.l1 { padding-left: 11px; }
.l2 { padding-left: 22px; }
.addnew { font-style: italic; letter-spacing: .1px; }

.hscroll { display: flex; align-items: stretch; flex: none; background: #fff; }
.hscroll.top { height: 13px; margin-left: 1px; margin-right: 6px; }
.sbtn { width: 13px; flex: none; border: 1px solid #bcbcb8; background: #f4f4f2; display: flex; align-items: center; justify-content: center; }
.sbtn.left { border-radius: 7px 0 0 7px; border-right: 0; }
.sbtn.right { border-radius: 0 7px 7px 0; border-left: 0; }
.sbtn.left::before { content: ""; border: 3px solid transparent; border-right: 4px solid #8a8a8a; border-left: 0; }
.sbtn.right::before { content: ""; border: 3px solid transparent; border-left: 4px solid #8a8a8a; border-right: 0; }
.thumb {
  display: flex; align-items: center; justify-content: center;
  background: linear-gradient(#f9f9f7, #eeeeec 60%, #dcdcd8);
  border: 1px solid #bcbcb8; border-bottom-color: #a8a8a4; border-radius: 7px;
}
.top .thumb { width: 1534px; flex: none; }
.strack { flex: 1; background: linear-gradient(#e4e4e0, #eeeeec); border-top: 1px solid #bcbcb8; border-bottom: 1px solid #bcbcb8; }
.grip { width: 8px; height: 5px; background: repeating-linear-gradient(90deg, #bcbcb8 0 1px, transparent 1px 3px); }

.editor { height: 186px; margin-top: 6px; margin-left: 1px; background: #f5f5f5; }
.etab { width: 128px; padding-left: 5px; font-size: 13px; }
.etab:nth-child(1) { width: 142px; padding: 0 4px 0 4px; }
.etab:nth-child(2) { width: 143px; }
.etab:nth-child(3), .etab:nth-child(4) { letter-spacing: -.3px; }
.etab:nth-child(5) { width: 153px; }
.etab:nth-child(6) { width: 140px; }
.etab:nth-child(7) { width: 139px; }
.etab:nth-child(8) { width: 90px; }
.etab:nth-child(9) { width: 149px; }
.etab:nth-child(10) { width: 140px; }
.etab:nth-child(11) { width: 140px; }
.etab:nth-child(12) { width: 153px; }
.fi {
  width: 13px; height: 15px; margin: 0 2px 0 1px; flex: none; text-align: center;
  background: #fff; border: 1px solid #a98f52; border-top-right-radius: 3px;
  font: 700 9px/15px "DejaVu Sans", sans-serif; letter-spacing: -.5px; color: #2f6090;
}
.fi.shared { border-color: #777; box-shadow: -2px -2px 0 0 #e0c050; }
.chev { font-size: 13px; color: #444; align-self: center; }
.chev sub { font-size: 10px; color: #777; }

.edbody { flex: 1; min-height: 0; display: flex; }
.edmain { width: 1796px; flex: none; display: flex; flex-direction: column; }
.edrow { display: flex; height: 137px; background: #fff; }
.code { width: 1779px; flex: none; font: 11.6px/17px "DejaVu Sans Mono", monospace; color: #111; }
.ln { display: flex; height: 15px; }
.ln.tail { height: 2px; }
.gut { width: 12px; margin-left: 1px; flex: none; display: flex; align-items: center; }
.gut.hatch { background: #f3b8a6; background-image: repeating-conic-gradient(#e8937e 0 25%, #f9d3c8 0 50%); background-size: 2px 2px; }
.marker { width: 7px; height: 8px; background: #2f7fd0; clip-path: polygon(0 25%, 50% 25%, 50% 0, 100% 50%, 50% 100%, 50% 75%, 0 75%); }
.num { width: 21px; flex: none; text-align: right; color: #787878; background: #fff; }
.src { flex: 1; margin-left: 3px; white-space: pre; }
.src b { color: #7f0055; font-weight: 700; }
.src strong { font-weight: 700; color: #000; }
.src .str { font-style: normal; color: #2a00ff; }
.src u { text-decoration: none; color: #0000c0; }
.src em { color: #0000c0; font-style: italic; }
.cur { background: #e8f2fe; }
.green { display: inline-block; height: 15px; background: #c6dbae; vertical-align: top; }
.vscroll { width: 13px; margin-left: 3px; flex: none; display: flex; flex-direction: column; }
.vbtn { height: 14px; flex: none; border: 1px solid #c2c2be; background: #f6f6f4; display: flex; align-items: center; justify-content: center; }
.vbtn.up { border-radius: 7px 7px 0 0; border-bottom: 0; }
.vbtn.dn { border-radius: 0 0 7px 7px; border-top: 0; }
.vbtn.up::before { content: ""; border: 3px solid transparent; border-bottom: 4px solid #666; border-top: 0; }
.vbtn.dn::before { content: ""; border: 3px solid transparent; border-top: 4px solid #666; border-bottom: 0; }
.vtrack { flex: 1; padding-top: 42px; background: #dcdcd8; border-left: 1px solid #c2c2be; border-right: 1px solid #c2c2be; }
.vthumb { display: block; height: 30px; margin: 0 -1px; background: #fdfdfb; border: 1px solid #bcbcb8; border-radius: 7px; }
.hscroll.ed { height: 12px; margin: 4px 15px 1px 36px; background: transparent; }
.ed .thumb { flex: 1; }
.ruler { flex: 1; padding: 27px 3px 0 2px; display: flex; flex-direction: column; gap: 2px; background: #f5f5f5; }
.mk { display: block; flex: none; background: #eee; border: 1px solid #d8d8d8; }
.h3 { height: 4px; margin-top: -2px; }
.h5 { height: 5px; }
.h6 { height: 6px; }
.h8 { height: 8px; }
.gap { margin-top: 3px; }
.gmk { background: #e6f2d8; border-color: #c4dcae; margin-top: 1px; }

.bottomrow { height: 51px; margin-top: 6px; display: flex; gap: 6px; flex: none; }
.debugp { width: 902px; margin-left: 1px; background: #fff; }
.searchp { width: 901px; background: #fff; }
.t-con { width: 76px; padding-left: 4px; font-size: 12.6px; }
.t-dbg { width: 91px; padding: 0 5px 0 3px; font-size: 13.5px; }
.dbgtree {
  display: grid; grid-auto-flow: column; align-items: center; justify-content: start;
  grid-template-columns: 19.5px 24.5px 20.5px 23.5px 20.5px 21px auto;
  height: 20px; padding-left: 6.5px; margin-top: 5px; white-space: nowrap; letter-spacing: .2px;
}
.dbgtree .ar { margin-right: 0; padding-right: 0; }
.t-sea { width: 89px; padding: 0 3px 0 4px; font-size: 13px; }
.searchres { padding: 0 0 0 6px; height: 18px; line-height: 17px; letter-spacing: .1px; border-bottom: 1px solid #e2e2e2; }

.status { flex: 1; display: grid; grid-template-columns: 1422px 327px 19px 20px; align-items: center; }
```
